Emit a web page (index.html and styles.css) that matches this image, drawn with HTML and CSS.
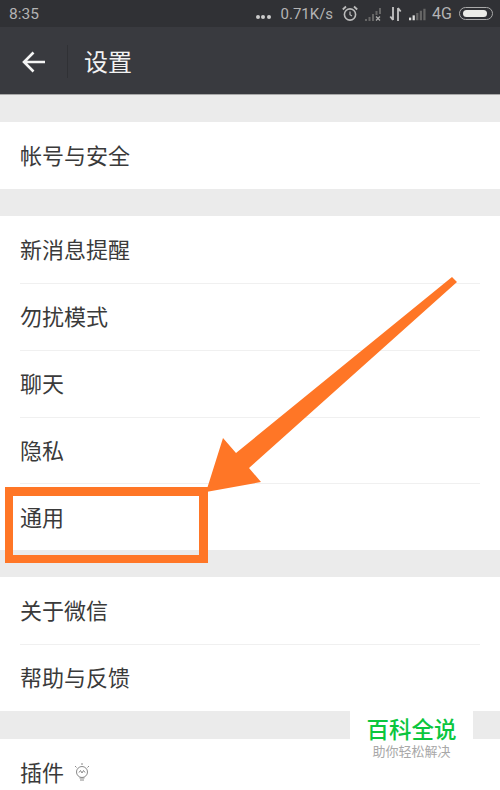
FILE: index.html
```html
<!DOCTYPE html>
<html lang="zh">
<head>
<meta charset="utf-8">
<title>设置</title>
<link rel="stylesheet" href="styles.css">
</head>
<body>
<div class="page">
  <div class="status">
    <span class="time">8:35</span>
    <div class="status-right">
      <span class="dots"><i></i><i></i><i></i></span>
      <span class="speed">0.71K/s</span>
      <svg class="ic-alarm" width="16" height="17" viewBox="0 0 16 17" fill="none" stroke="#bbb"><circle cx="8" cy="9.500" r="5.600" stroke-width="1.600"/><path d="M8 6.500v3.200l2 1.200" stroke-width="1.200"/><path d="M.8 4.500 4 1.500M15.200 4.500 12 1.500" stroke-width="1.800"/></svg>
      <svg class="ic-sig1" width="18" height="14" viewBox="0 0 18 14" fill="#666"><path d="M0 12h2v2H0zM3.500 10h2v4h-2zM7 7h2v7H7zM10.500 4h2v4h-2zM14 1h2v6h-2z"/><path d="M11 9.500l4 4M15 9.500l-4 4" stroke="#aaa" stroke-width="1.300"/></svg>
      <svg class="ic-updown" width="13" height="16" viewBox="0 0 12 16" fill="none" stroke="#c4c4c4" stroke-width="1.800"><path d="M3.500 1v13M.8 10.500l2.700 3.500M8.500 15V2M11.200 5.500 8.500 2"/></svg>
      <svg class="ic-sig2" width="17" height="14" viewBox="0 0 19 14" fill="#666"><path d="M0 11h2.500v3H0z" fill="#ddd"/><path d="M4 8.500h2.500V14H4z" fill="#ddd"/><path d="M8 6h2.500v8H8zM12 3.500h2.500V14H12zM16 1h2.500v13H16z"/></svg>
      <span class="net">4G</span>
      <span class="battery"><span class="battery-fill"></span></span>
    </div>
  </div>
  <header class="bar">
    <svg class="back" width="24" height="22" viewBox="0 0 24 22" fill="none" stroke="#f4f4f4" stroke-width="2.600"><path d="M23 11H2M11.500 1.500 2 11l9.500 9.500"/></svg>
    <span class="divider"></span>
    <span class="title">设置</span>
  </header>
  <section class="group first">
    <div class="row">帐号与安全</div>
  </section>
  <section class="group">
    <div class="row">新消息提醒</div>
    <div class="row">勿扰模式</div>
    <div class="row">聊天</div>
    <div class="row">隐私</div>
    <div class="row">通用</div>
  </section>
  <section class="group">
    <div class="row">关于微信</div>
    <div class="row">帮助与反馈</div>
  </section>
  <section class="group last">
    <div class="row">插件
      <svg class="bulb" width="18" height="20" viewBox="1 0 18 20" fill="none" stroke="#8a8a8a" stroke-width="1"><circle cx="10" cy="10" r="5.500"/><path d="M7.500 16h5M8 18h4M3 4l1.500 1.500M17 4l-1.500 1.500M10 1v2"/><path d="M7 10.500l1.500-2 1.500 2.500 1.500-2.500 1.500 2"/></svg>
    </div>
  </section>
</div>
<svg class="annot" width="500" height="790" viewBox="0 0 500 790">
  <polygon fill="#ff7626" points="452,277 457,282 249,468 261,482 206,492 223,438 236,453"/>
  <path fill="#ff7626" fill-rule="evenodd" d="M5 487H208V563H5ZM13 496V555H199V496Z"/>
</svg>
<div class="mark">
  <div class="mark-title">百科全说</div>
  <div class="mark-sub">助你轻松解决</div>
</div>
</body>
</html>
```
FILE: styles.css
```css
* { box-sizing: border-box; }
html, body { margin: 0; height: 790px; overflow: hidden; }
body { position: relative; background: #ebebeb; font-family: "Noto Sans CJK SC", "Noto Sans", sans-serif; }
.page { display: flex; flex-direction: column; height: 790px; overflow: hidden; }
.status { flex: none; height: 27px; background: #303135; display: flex; align-items: center; justify-content: space-between; padding: 0 7px 0 9px; color: #b4b4b4; font-family: Roboto, sans-serif; font-size: 15px; }
.time { font-size: 15.500px; }
.status-right { display: flex; align-items: center; }
.dots { display: flex; gap: 1.500px; margin-right: 10px; padding-top: 6px; }
.dots i { width: 4px; height: 4px; border-radius: 50%; background: #ccc; }
.speed { margin-right: 9px; }
.ic-alarm { margin-right: 7px; }
.ic-sig1 { margin-right: 6px; }
.ic-updown { margin-right: 7px; }
.ic-sig2 { margin-right: 6px; }
.net { margin-right: 7px; font-size: 16px; }
.battery { width: 34px; height: 13px; border: 1.500px solid #aaa; border-radius: 7px; padding: 1.500px 3px; display: block; }
.battery-fill { display: block; width: 24px; height: 7px; background: #ecece8; border-radius: 4px; }
.bar { flex: none; height: 68px; background: #393a3f; border-bottom: 1px solid #a8a8a8; display: flex; align-items: center; padding: 2px 0 0 22px; }
.back { display: block; }
.divider { width: 1px; height: 33px; background: #303135; margin-left: 21px; }
.title { margin: 0 0 2px 16px; color: #f2f2f2; font-size: 24px; line-height: 1; }
.group { margin-top: 27px; background: #fff; flex: none; }
.first { margin-top: 27.400px; }
.last { margin-top: 28px; }
.row { height: 66.800px; margin-left: 20px; margin-right: 20px; display: flex; align-items: center; font-size: 22px; color: #3a3a3a; border-top: 1px solid #f0f0f0; gap: 9px; padding-bottom: 3px; }
.row:first-child { border-top: 0; }
.bulb { display: block; margin-top: 2px; }
.annot { position: absolute; left: 0; top: 0; }
.mark { position: absolute; left: 350px; top: 711px; width: 123px; height: 79px; background: #fff; text-align: center; padding-top: 4px; }
.mark-title { color: #0bc63e; font-size: 22.500px; line-height: 26px; font-weight: 500; }
.mark-sub { color: #a8a8a8; font-size: 13px; line-height: 16px; margin-top: 2px; }
```
